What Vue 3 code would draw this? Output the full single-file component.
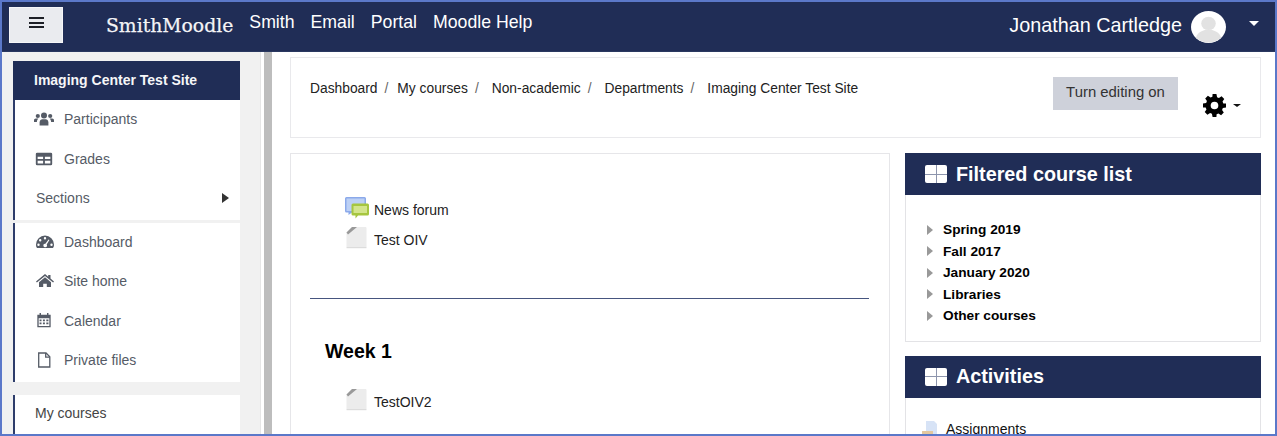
<script setup>
const navLinks = ["Smith", "Email", "Portal", "Moodle Help"];
const crumbs = ["Dashboard", "My courses", "Non-academic", "Departments", "Imaging Center Test Site"];
const courses = ["Spring 2019", "Fall 2017", "January 2020", "Libraries", "Other courses"];
const siteLinks = [
  { label: "Dashboard", icon: "dash" },
  { label: "Site home", icon: "home" },
  { label: "Calendar", icon: "cal" },
  { label: "Private files", icon: "file" }
];
</script>

<template>
  <div class="frame">
    <header class="topbar">
      <button type="button" class="menu-btn">
        <span></span><span></span><span></span>
      </button>
      <div class="brand">SmithMoodle</div>
      <nav class="top-links">
        <a v-for="link in navLinks" :key="link">{{ link }}</a>
      </nav>
      <div class="user">
        <span class="user-name">Jonathan Cartledge</span>
        <svg class="avatar" viewBox="0 0 36 36" preserveAspectRatio="none">
          <circle cx="18" cy="18" r="18" fill="#fff" />
          <circle cx="18" cy="14" r="7.5" fill="#e2e2e2" />
          <path d="M5 30c2-7 8-9 13-9s11 2 13 9a18 18 0 0 1-26 0z" fill="#e2e2e2" />
        </svg>
        <span class="caret-white"></span>
      </div>
    </header>

    <div class="page">
      <aside class="sidebar">
        <div class="side-group">
          <div class="side-title">Imaging Center Test Site</div>
          <div class="side-item first-item">
            <svg class="side-icon" viewBox="0 0 20 16" fill="#555b66">
              <circle cx="10" cy="4.6" r="3" />
              <circle cx="3.8" cy="5" r="2.1" />
              <circle cx="16.2" cy="5" r="2.1" />
              <path d="M5.6 14.5v-3c0-2 1.6-3.2 2.6-3.2h3.6c1 0 2.6 1.2 2.6 3.2v3z" />
              <path d="M0 11V9.300c0-1 .8-1.800 1.800-1.800h2.600c-.9.800-1.500 1.900-1.500 3.500z" />
              <path d="M20 11V9.300c0-1-.8-1.800-1.800-1.800h-2.600c.9.800 1.500 1.900 1.500 3.500z" />
            </svg>
            <span>Participants</span>
          </div>
          <div class="side-item">
            <svg class="side-icon" viewBox="-2 -1 22 16" fill="#555b66">
              <path fill-rule="evenodd" d="M1.500 0h15A1.500 1.500 0 0 1 18 1.500v11a1.500 1.500 0 0 1-1.500 1.500h-15A1.500 1.500 0 0 1 0 12.500v-11A1.500 1.500 0 0 1 1.500 0zM2 4.500v2.500h6V4.500zm8 0v2.500h6V4.500zM2 9v3h6V9zm8 0v3h6V9z" />
            </svg>
            <span>Grades</span>
          </div>
          <div class="side-item sections">
            <span>Sections</span>
            <span class="arrow-right"></span>
          </div>
        </div>

        <div class="side-group second">
          <div v-for="link in siteLinks" :key="link.label" class="side-item">
            <svg v-if="link.icon === 'dash'" class="side-icon" viewBox="-2 -1 20 16" fill="#555b66">
              <path fill-rule="evenodd" d="M9 .5a9 9 0 0 1 9 9c0 1.700-.4 3-1.200 3.500H1.200C.4 12.500 0 11.200 0 9.500a9 9 0 0 1 9-9zM9 2a1.200 1.200 0 1 0 0 2.400A1.200 1.200 0 0 0 9 2zM4.200 4a1.200 1.200 0 1 0 0 2.400 1.200 1.200 0 0 0 0-2.400zM2.500 8.500a1.200 1.200 0 1 0 0 2.400 1.200 1.200 0 0 0 0-2.400zm13 0a1.200 1.200 0 1 0 0 2.400 1.200 1.200 0 0 0 0-2.400zM12.600 4.500L9.400 8.700a1.800 1.800 0 1 0 1.300.9l2.700-4.600z" />
            </svg>
            <svg v-else-if="link.icon === 'home'" class="side-icon" viewBox="-2 -1 20 16" fill="#555b66">
              <path d="M9 0l3.200 2.700V1h2.300v3.600L18 7.500l-.9 1L9 1.900.9 8.500 0 7.500z" />
              <path d="M9 3.300l6 4.900V13h-4.200V9.800H7.200V13H3V8.200z" />
            </svg>
            <svg v-else-if="link.icon === 'cal'" class="side-icon" viewBox="-2 0 22 18" fill="#555b66">
              <path fill-rule="evenodd" d="M4 0h1.600v2h6.800V0H14v2h2.500v14h-15V2H4zM3 6v8.500h12V6zm1 1.300h2.200v1.900H4zm3.800 0H10v1.900H7.800zm3.800 0H14v1.900h-2.400zM4 10.800h2.200v1.900H4zm3.800 0H10v1.900H7.800zm3.800 0H14v1.900h-2.400z" />
            </svg>
            <svg v-else class="side-icon" viewBox="0 0 20 16" fill="none" stroke="#555b66" stroke-width="1.300">
              <path d="M4.700 1h7.300l3.800 3.800V15H4.700z" />
              <path d="M11.700 1v4.100h4" />
            </svg>
            <span>{{ link.label }}</span>
          </div>
        </div>

        <div class="side-group third">
          <div class="side-item plain">My courses</div>
        </div>
      </aside>

      <div class="gutter"></div>

      <main class="content">
        <section class="crumb-card">
          <ol class="crumbs">
            <li v-for="(crumb, i) in crumbs" :key="crumb">
              {{ crumb }}<span v-if="i < crumbs.length - 1" class="sep">/</span>
            </li>
          </ol>
          <button type="button" class="edit-btn">Turn editing on</button>
          <div class="gear-wrap">
            <svg class="gear" viewBox="0 0 24 24" fill="#000">
              <path fill-rule="evenodd" d="M10 0h4l.7 3.300 1.900.8 2.800-1.800 2.800 2.800-1.800 2.800.8 1.900L24 10v4l-3.300.7-.8 1.900 1.800 2.800-2.800 2.800-2.800-1.800-1.900.8L14 24h-4l-.7-3.300-1.900-.8-2.800 1.800-2.800-2.800 1.800-2.800-.8-1.900L0 14v-4l3.300-.7.8-1.900L2.300 4.600l2.800-2.800 2.800 1.800 1.900-.8zM12 8a4 4 0 1 0 0 8 4 4 0 0 0 0-8z" />
            </svg>
            <span class="caret-black"></span>
          </div>
        </section>

        <div class="columns">
          <section class="course-card">
            <div class="activity">
              <svg class="act-icon" viewBox="0 1 24 24">
                <path d="M1.500 0h18A1.500 1.500 0 0 1 21 1.500V14a1.500 1.500 0 0 1-1.500 1.500H7L3.500 18v-2.500h-2A1.500 1.500 0 0 1 0 14V1.500A1.500 1.500 0 0 1 1.500 0z" fill="#8ba9ea" />
                <path d="M1.500 1.500h18v12.500h-18z" fill="#bcd0f5" />
                <path d="M8 6.500h14.500A1.500 1.500 0 0 1 24 8v9a1.500 1.500 0 0 1-1.500 1.500H13l-2.500 3v-3H8A1.500 1.500 0 0 1 6.500 17V8A1.500 1.500 0 0 1 8 6.500z" fill="#a6c63f" />
                <path d="M8.500 9h13.500v7H8.500z" fill="#d3e58c" />
              </svg>
              <span>News forum</span>
            </div>
            <div class="activity">
              <svg class="act-icon" viewBox="0 1 24 24">
                <path d="M7 0h13.500a1 1 0 0 1 1 1v19h-20V5.500z" fill="#ececec" />
                <path d="M1.500 20h20v1.200h-20z" fill="#dcdcdc" />
                <path d="M7 0h5L3 7.500 1.500 5.500z" fill="#999" />
              </svg>
              <span>Test OIV</span>
            </div>
            <hr class="divider" />
            <h3 class="week">Week 1</h3>
            <div class="activity">
              <svg class="act-icon" viewBox="0 1 24 24">
                <path d="M7 0h13.500a1 1 0 0 1 1 1v19h-20V5.500z" fill="#ececec" />
                <path d="M1.500 20h20v1.200h-20z" fill="#dcdcdc" />
                <path d="M7 0h5L3 7.500 1.500 5.500z" fill="#999" />
              </svg>
              <span>TestOIV2</span>
            </div>
          </section>

          <div class="blocks">
            <section class="block">
              <h2 class="block-head"><span class="block-icon"></span>Filtered course list</h2>
              <ul class="course-list">
                <li v-for="course in courses" :key="course">
                  <span class="tree-arrow"></span>{{ course }}
                </li>
              </ul>
            </section>
            <section class="block">
              <h2 class="block-head"><span class="block-icon"></span>Activities</h2>
              <div class="assign">
                <svg class="assign-icon" viewBox="0 0 16 16">
                  <path d="M4 0h8l3 3v13H4z" fill="#d7e3f6" />
                  <path d="M0 10h11v6H0z" fill="#e3c79f" />
                </svg>
                <span>Assignments</span>
              </div>
            </section>
          </div>
        </div>
      </main>
    </div>
  </div>
</template>

<style>
html,
body {
  margin: 0;
  background: #fff;
}
</style>

<style scoped>
.frame {
  width: 1277px;
  height: 436px;
  box-sizing: border-box;
  border: 2px solid #5b78c9;
  overflow: hidden;
  background: #fff;
  font-family: "Liberation Sans", Arial, sans-serif;
  color: #111;
}

.topbar {
  height: 50px;
  background: #202d56;
  display: flex;
  align-items: center;
  box-sizing: border-box;
  border-bottom: 1px solid #2a3860;
  color: #fff;
}

.menu-btn {
  width: 54px;
  height: 36px;
  margin: -4px 0 0 7px;
  background: #eaebef;
  border: 1px solid #f6f6f8;
  display: flex;
  flex-direction: column;
  align-items: center;
  justify-content: center;
  gap: 2.500px;
  padding: 0 0 4px;
}

.menu-btn span {
  display: block;
  width: 15px;
  height: 2px;
  background: #1d1f26;
}

.brand {
  margin: 0 0 2px 43px;
  font-family: "DejaVu Serif", "Liberation Serif", serif;
  font-size: 18.800px;
  -webkit-text-stroke: 0.25px #f4f4f6;
  color: #f4f4f6;
}

.top-links {
  display: flex;
  gap: 16px;
  margin: -9px 0 0 16px;
  font-size: 17.700px;
}

.user {
  margin-left: auto;
  display: flex;
  align-items: center;
}

.user-name {
  font-size: 19.800px;
  margin-bottom: 3px;
}

.avatar {
  width: 35px;
  height: 32px;
  margin-left: 9px;
}

.caret-white {
  width: 0;
  height: 0;
  margin: 0 16px 7px 23px;
  border-left: 5.500px solid transparent;
  border-right: 5.500px solid transparent;
  border-top: 5px solid #fff;
}

.page {
  display: flex;
  height: 382px;
  overflow: hidden;
}

.sidebar {
  width: 259px;
  flex-shrink: 0;
  background: #f1f1f1;
  padding: 9px 0 0 11px;
  box-sizing: border-box;
  border-right: 1px solid #e6e6e6;
}

.side-group {
  width: 227px;
  background: #fff;
  box-sizing: border-box;
  border-left: 2px solid #2e3d6b;
}

.side-title {
  height: 39px;
  margin-left: -2px;
  padding-left: 21px;
  background: #202d56;
  color: #f6f6f8;
  font-size: 14px;
  font-weight: 700;
  line-height: 38px;
}

.side-item {
  height: 39.500px;
  display: flex;
  align-items: center;
  padding-left: 19px;
  font-size: 14px;
  color: #555b66;
}

.first-item {
  height: 38.500px;
  padding-bottom: 1px;
}

.side-icon {
  width: 20px;
  height: 16px;
  margin-right: 10px;
  flex-shrink: 0;
}

.sections {
  box-sizing: border-box;
  padding: 0 11px 3px 21px;
  justify-content: space-between;
  height: 41px;
}

.arrow-right {
  width: 0;
  height: 0;
  border-top: 5.500px solid transparent;
  border-bottom: 5.500px solid transparent;
  border-left: 7px solid #333;
}

.second {
  display: flow-root;
  margin-top: 3px;
  height: 159px;
}

.second .side-item:first-child {
  margin-top: -1px;
}

.third {
  margin-top: 13px;
  height: 60px;
}

.plain {
  height: 36px;
  padding-left: 20px;
  color: #444;
}

.gutter {
  width: 8px;
  margin-left: 3px;
  flex-shrink: 0;
  background: #bdbdbd;
}

.content {
  flex: 1;
  min-width: 0;
  padding: 5px 14px 0 18px;
  box-sizing: border-box;
}

.crumb-card {
  height: 81px;
  border: 1px solid #e9e9ec;
  box-sizing: border-box;
  display: flex;
  align-items: flex-start;
  padding: 0 19px 0 19px;
}

.crumbs {
  display: flex;
  list-style: none;
  margin: 23px 0 0;
  padding: 0;
  font-size: 13.800px;
  color: #222;
}

.sep {
  margin: 0 13px 0 7px;
  color: #666;
}

.crumbs li:first-child .sep {
  margin-right: 9px;
}

.edit-btn {
  margin: 19px 0 0 auto;
  width: 125px;
  height: 33px;
  padding: 0 0 4px;
  background: #ced1da;
  border: 0;
  font-family: inherit;
  font-size: 14.900px;
  color: #333;
}

.gear-wrap {
  display: flex;
  align-items: center;
  margin: 36px 0 0 25px;
}

.gear {
  width: 23px;
  height: 23px;
}

.caret-black {
  width: 0;
  height: 0;
  margin-left: 7px;
  border-left: 4px solid transparent;
  border-right: 4px solid transparent;
  border-top: 3.500px solid #111;
}

.columns {
  display: flex;
  gap: 15px;
  margin-top: 15px;
}

.course-card {
  width: 600px;
  height: 300px;
  flex-shrink: 0;
  box-sizing: border-box;
  border: 1px solid #e6e6e9;
  padding: 41px 20px 0 54px;
}

.activity {
  display: flex;
  align-items: center;
  height: 30px;
  font-size: 14px;
  color: #222;
}

.act-icon {
  width: 24px;
  height: 24px;
  margin-right: 5px;
  flex-shrink: 0;
  overflow: visible;
}

.divider {
  margin: 43px 0 0 -35px;
  border: 0;
  border-top: 1px solid #46557f;
}

.week {
  margin: 41px 0 25px -20px;
  font-size: 19.500px;
  line-height: 22px;
  color: #000;
}

.blocks {
  flex: 1;
  min-width: 0;
}

.block {
  border: 1px solid #e3e3e6;
  border-top: 0;
  box-sizing: border-box;
}

.block + .block {
  margin-top: 14px;
  height: 100px;
}

.block-head {
  height: 42px;
  margin: 0 -1px;
  padding-left: 20px;
  display: flex;
  align-items: center;
  background: #202d56;
  color: #fff;
  font-size: 19.800px;
  font-weight: 700;
}

.block-icon {
  width: 22px;
  height: 18px;
  margin-right: 9px;
  border-radius: 2px;
  background:
    linear-gradient(#8d95ad, #8d95ad) center / 100% 1px no-repeat,
    linear-gradient(#8d95ad, #8d95ad) center / 1px 100% no-repeat,
    #fff;
}

.course-list {
  list-style: none;
  margin: 0;
  padding: 24px 0 14px 21px;
  font-size: 13.700px;
  font-weight: 700;
  color: #000;
}

.course-list li {
  display: flex;
  align-items: center;
  height: 21.500px;
}

.tree-arrow {
  width: 0;
  height: 0;
  margin-right: 10px;
  border-top: 5px solid transparent;
  border-bottom: 5px solid transparent;
  border-left: 6px solid #999;
}

.assign {
  display: flex;
  align-items: center;
  padding: 23px 0 0 16px;
  font-size: 14px;
  color: #111;
}

.assign-icon {
  width: 16px;
  height: 16px;
  margin-right: 8px;
}
</style>
